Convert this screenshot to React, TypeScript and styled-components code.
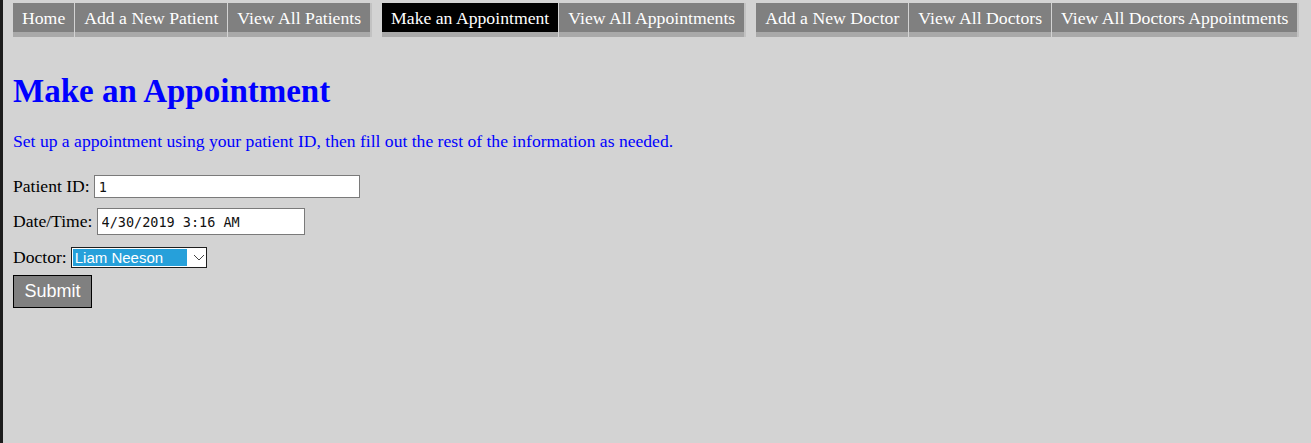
import React from 'react';
import styled, {createGlobalStyle} from 'styled-components';

const GlobalStyle = createGlobalStyle`
  html, body {
    margin: 0;
    padding: 0;
    height: 100%;
  }
  body {
    background-color: #d3d3d3;
    border-left: 3px solid #1c1c1c;
    font-family: "Liberation Serif", "Times New Roman", serif;
    box-sizing: border-box;
  }
`

const navGroups = [
    ['Home', 'Add a New Patient', 'View All Patients'],
    ['Make an Appointment', 'View All Appointments'],
    ['Add a New Doctor', 'View All Doctors', 'View All Doctors Appointments'],
];

export default function App() {
    return (
        <>
            <GlobalStyle/>
            <StyledPage>
                <StyledNav>
                    {navGroups.map((group, i) => (
                        <StyledNavGroup key={i}>
                            {group.map(item => (
                                <StyledNavLink key={item} active={item === 'Make an Appointment'}>
                                    {item}
                                </StyledNavLink>
                            ))}
                        </StyledNavGroup>
                    ))}
                </StyledNav>

                <StyledTitle>Make an Appointment</StyledTitle>
                <StyledIntro>
                    Set up a appointment using your patient ID, then fill out the rest of the information as needed.
                </StyledIntro>

                <StyledForm>
                    <StyledRow gap={10}>
                        <StyledLabel>Patient ID:</StyledLabel>
                        <StyledInput width={266} defaultValue="1"/>
                    </StyledRow>
                    <StyledRow gap={12}>
                        <StyledLabel>Date/Time:</StyledLabel>
                        <StyledInput width={208} height={27} defaultValue="4/30/2019 3:16 AM"/>
                    </StyledRow>
                    <StyledRow gap={7}>
                        <StyledLabel>Doctor:</StyledLabel>
                        <StyledSelect>
                            <StyledSelected>Liam Neeson</StyledSelected>
                            <StyledChevron width="12" height="7" viewBox="0 0 12 7">
                                <path d="M1 1 L6 6 L11 1" fill="none" stroke="#444" strokeWidth="1"/>
                            </StyledChevron>
                        </StyledSelect>
                    </StyledRow>
                    <StyledSubmit type="button">Submit</StyledSubmit>
                </StyledForm>
            </StyledPage>
        </>
    );
}

const StyledPage = styled.div`
  padding: 3px 10px 0 10px;
`
const StyledNav = styled.nav`
  display: flex;
  gap: 12px;
`
const StyledNavGroup = styled.div`
  display: flex;
  gap: 1px;
  box-shadow: 2px 0 0 #c2c2c2;
`
const StyledNavLink = styled.a<{active?: boolean}>`
  display: block;
  height: 29px;
  line-height: 30px;
  padding: 0 9px;
  font-size: 17.7px;
  color: #fff;
  white-space: nowrap;
  background-color: ${p => p.active ? '#000' : '#808080'};
  border-bottom: 5px solid #a9a9a9;
  cursor: pointer;
`
const StyledTitle = styled.h1`
  color: #0000ff;
  font-size: 33px;
  font-weight: bold;
  margin: 36px 0 0 0;
  line-height: 37px;
`
const StyledIntro = styled.p`
  color: #0000ff;
  font-size: 17.6px;
  margin: 21px 0 24px 0;
  line-height: 20px;
`
const StyledForm = styled.form`
  display: flex;
  flex-direction: column;
  align-items: flex-start;
`
const StyledRow = styled.div<{gap: number}>`
  display: flex;
  align-items: center;
  gap: 4px;
  margin-bottom: ${p => p.gap}px;
  font-size: 17.6px;
  color: #000;
`
const StyledLabel = styled.label`
  white-space: nowrap;
`
const StyledInput = styled.input<{width: number; height?: number}>`
  box-sizing: border-box;
  width: ${p => p.width}px;
  height: ${p => p.height ?? 23}px;
  border: 1px solid #7a7a7a;
  background: #fff;
  padding: 0 4px;
  font-family: "DejaVu Sans Mono", "Liberation Mono", monospace;
  font-size: 13.5px;
  color: #111;
  outline: none;
`
const StyledSelect = styled.div`
  box-sizing: border-box;
  width: 136px;
  height: 21px;
  border: 1px solid #1e1e1e;
  background: #fff;
  display: flex;
  align-items: stretch;
  padding: 1px;
`
const StyledSelected = styled.span`
  background-color: #26a0da;
  color: #fff;
  font-family: "Liberation Sans", Arial, sans-serif;
  font-size: 15px;
  line-height: 17px;
  padding: 0 2px;
  width: 110px;
  white-space: nowrap;
`
const StyledChevron = styled.svg`
  align-self: center;
  margin-left: 6px;
`
const StyledSubmit = styled.button`
  box-sizing: border-box;
  width: 79px;
  height: 33px;
  background-color: #808080;
  border: 1px solid #000;
  color: #fff;
  font-family: "Liberation Sans", Arial, sans-serif;
  font-size: 18px;
  padding: 0;
  cursor: pointer;
`
